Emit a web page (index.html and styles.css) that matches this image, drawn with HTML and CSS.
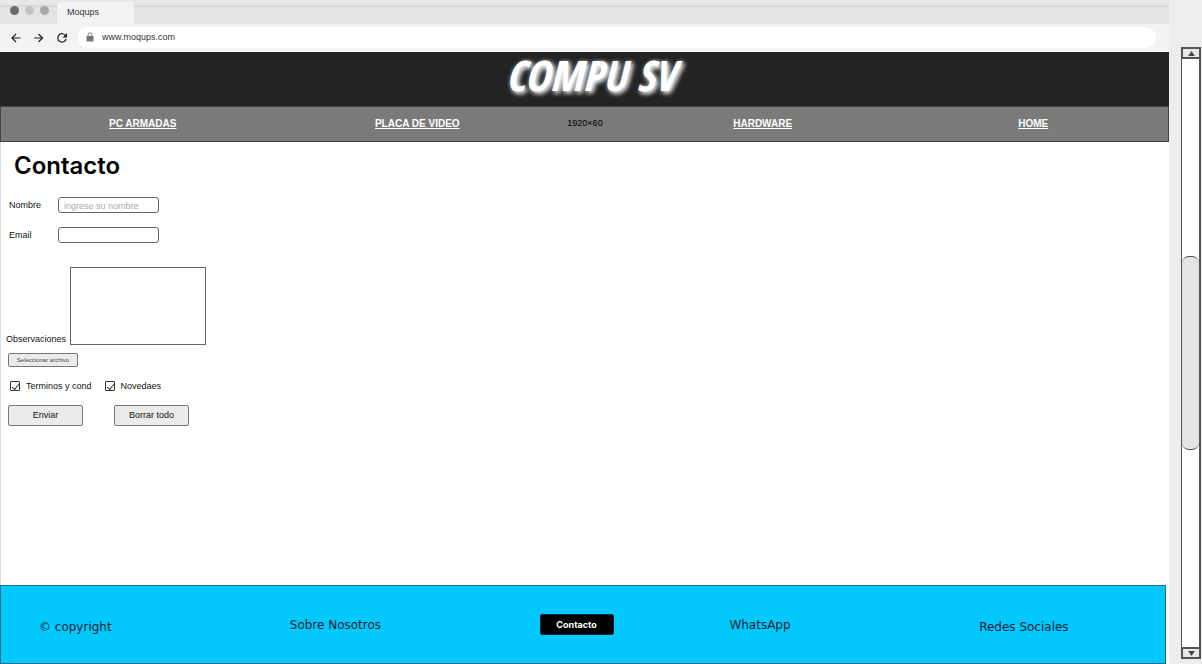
FILE: index.html
```html
<!DOCTYPE html>
<html lang="es">
<head>
<meta charset="utf-8">
<title>Compu SV - Contacto</title>
<link rel="stylesheet" href="styles.css">
</head>
<body>
<div class="browser">
  <div class="tabs">
    <span class="dot dot-dark"></span><span class="dot dot-light"></span><span class="dot"></span>
    <span class="tab">Moqups</span>
  </div>
  <div class="toolbar">
    <button class="tool" type="button" aria-label="Atrás"><svg viewBox="0 0 12 12"><path d="M10.5 6H2M6 2 2 6l4 4"/></svg></button>
    <button class="tool" type="button" aria-label="Adelante"><svg viewBox="0 0 12 12"><path d="M1 6h8.5M5.5 2l4 4-4 4"/></svg></button>
    <button class="tool" type="button" aria-label="Recargar"><svg viewBox="0 0 12 12"><path d="M9.6 3.7A4.2 4.2 0 1 0 10.1 7"/><path class="solid" d="M11 1v4.4H6.6z"/></svg></button>
    <div class="address">
      <svg class="lock" viewBox="0 0 8 10"><path class="solid" d="M.5 4h7v5.5h-7z"/><path d="M2.2 4V2.6a1.8 1.8 0 0 1 3.6 0V4"/></svg>
      <input class="url" type="text" value="www.moqups.com" aria-label="Dirección">
    </div>
  </div>
  <header class="banner">COMPU SV</header>
  <nav class="nav">
    <a href="#">PC ARMADAS</a>
    <a href="#">PLACA DE VIDEO</a>
    <span class="size">1920×60</span>
    <a href="#">HARDWARE</a>
    <a href="#">HOME</a>
  </nav>
  <main class="main">
    <h1 class="title">Contacto</h1>
    <form class="form">
      <div class="row">
        <label class="label" for="nombre">Nombre</label>
        <input class="field" id="nombre" type="text" placeholder="ingrese su nombre">
      </div>
      <div class="row">
        <label class="label" for="email">Email</label>
        <input class="field" id="email" type="email">
      </div>
      <div class="row notes">
        <label class="notes-label" for="obs">Observaciones</label>
        <textarea class="area" id="obs"></textarea>
      </div>
      <button class="button file" type="button">Seleccionar archivo</button>
      <div class="checks">
        <label class="check"><input type="checkbox" checked>Terminos y cond</label>
        <label class="check"><input type="checkbox" checked>Novedaes</label>
      </div>
      <div class="actions">
        <button class="button" type="submit">Enviar</button>
        <button class="button" type="reset">Borrar todo</button>
      </div>
    </form>
  </main>
  <footer class="footer">
    <span class="low">© copyright</span>
    <a href="#">Sobre Nosotros</a>
    <button class="contact" type="button">Contacto</button>
    <a href="#">WhatsApp</a>
    <a class="low" href="#">Redes Sociales</a>
  </footer>
</div>
<aside class="scrollbar">
  <button class="arrow" type="button" aria-label="Subir"><svg viewBox="0 0 8 6"><path d="M4 0l4 6H0z"/></svg></button>
  <div class="track"><div class="thumb"></div></div>
  <button class="arrow" type="button" aria-label="Bajar"><svg viewBox="0 0 8 6"><path d="M0 0h8L4 6z"/></svg></button>
</aside>
</body>
</html>
```
FILE: styles.css
```css
* { box-sizing: border-box; }
body {
  margin: 0;
  min-height: 100vh;
  display: flex;
  background: #ededed;
  color: #111;
  font: 9px/12px "Liberation Sans", Arial, sans-serif;
}
button, input, textarea { font: inherit; color: inherit; margin: 0; }
button { padding: 0; }
a { color: inherit; text-decoration: none; }
.browser {
  flex: 1;
  display: flex;
  flex-direction: column;
  background: #fff;
}
.tabs {
  display: flex;
  gap: 6px;
  height: 24px;
  padding-left: 10px;
  background: linear-gradient(#e8e8e8 5px, #d8d8d8 5px, #d8d8d8 7px, #e4e4e4 7px);
}
.dot { width: 9px; height: 9px; margin-top: 6px; border-radius: 50%; background: #a9a9a9; }
.dot-dark { background: #6b6b6b; }
.dot-light { background: #c4c4c4; }
.tab {
  width: 77px;
  margin: 2px 0 0 2px;
  padding: 4px 10px;
  border-radius: 4px 4px 0 0;
  background: #f3f3f3;
  color: #333;
}
.toolbar {
  display: flex;
  align-items: center;
  gap: 11px;
  height: 28px;
  padding: 0 13px 0 10px;
  background: #f3f3f3;
  border-bottom: 1px solid #fff;
}
.tool { width: 12px; height: 12px; border: 0; background: none; }
.tool svg { display: block; width: 12px; height: 12px; fill: none; stroke: #222; stroke-width: 1.2; }
.tool .solid { fill: #222; stroke: none; }
.address {
  flex: 1;
  display: flex;
  align-items: center;
  gap: 8px;
  height: 21px;
  padding: 0 8px 2px;
  margin-left: -1px;
  border-radius: 11px;
  background: #fff;
}
.lock { width: 8px; height: 10px; fill: none; stroke: #777; }
.lock .solid { fill: #777; stroke: none; }
.url { flex: 1; padding: 0; border: 0; background: none; color: #333; outline: 0; }
.banner {
  height: 54px;
  background: #232323;
  color: #fff;
  text-align: center;
  font: italic bold 42px/46px "Open Sans Condensed", "Liberation Sans Narrow", Lato, sans-serif;
  text-shadow: 2px 2px 5px #fff, 1px 1px 5px #999;
  padding-left: 12px;
}
.nav {
  display: grid;
  grid-template-columns: 284fr 266fr 70fr 286fr 256fr 7fr;
  align-items: center;
  justify-items: center;
  height: 36px;
  border: 1px solid #444;
  background: #7a7a7a;
}
.nav a { color: #fff; font-weight: bold; font-size: 10px; text-decoration: underline; }
.size { color: #000; padding-bottom: 2px; }
.main { flex: 1; padding: 10px 6px; border-left: 1px solid #ddd; }
.title { margin: 0 0 17px 7px; font: 600 24px/28px Inter, sans-serif; color: #000; }
.form { display: flex; flex-direction: column; align-items: flex-start; }
.row { display: flex; align-items: center; margin-bottom: 14px; }
.label { width: 51px; padding-left: 2px; }
.field {
  width: 101px;
  height: 16px;
  padding: 1px 5px 0;
  border: 1px solid #666;
  border-radius: 3px;
  background: #fff;
}
.field::placeholder { color: #aaa; opacity: 1; }
.notes { align-items: flex-end; margin: 10px 0 8px -1px; }
.notes-label { width: 64px; }
.area { width: 136px; height: 78px; border: 1px solid #666; background: #fff; resize: none; }
.button {
  width: 75px;
  height: 21px;
  padding-bottom: 1px;
  border: 1px solid #777;
  border-radius: 2px;
  background: #ebebeb;
}
.file {
  width: 70px;
  height: 14px;
  margin-left: 1px;
  color: #444;
  font-size: 6px;
  line-height: 8px;
}
.checks { display: flex; gap: 13px; margin: 13px 0; padding-left: 3px; }
.check { display: flex; align-items: center; gap: 6px; }
.check input {
  appearance: none;
  width: 10px;
  height: 10px;
  border: 1px solid #333;
  border-radius: 1px;
  background: #fff;
}
.check input:checked::before {
  content: "";
  display: block;
  width: 6px;
  height: 3px;
  margin: 2px 0 0 1px;
  border: solid #333;
  border-width: 0 0 1px 1px;
  transform: rotate(-50deg);
}
.actions { display: flex; gap: 31px; margin-left: 1px; }
.footer {
  display: grid;
  grid-template-columns: 251fr 250fr 190fr 250fr 186fr;
  align-items: center;
  justify-items: start;
  height: 79px;
  margin-right: 3px;
  padding-left: 38px;
  border: 1px solid #1b6f8f;
  background: #02c8fc;
  color: #123;
  font: 12px/16px "DejaVu Sans", sans-serif;
}
.low { padding-top: 4px; }
.contact {
  width: 74px;
  height: 21px;
  border: 1px solid #123;
  border-radius: 2px;
  background: #000;
  color: #fff;
  font: bold 9px/12px Inter, sans-serif;
}
.scrollbar {
  display: flex;
  flex-direction: column;
  width: 20px;
  margin: 47px 1px 5px 12px;
}
.arrow {
  display: flex;
  align-items: center;
  justify-content: center;
  height: 12px;
  border: 2px solid #555;
  background: #e8e8e8;
}
.arrow svg { width: 7px; height: 5px; fill: #444; }
.track {
  flex: 1;
  display: flex;
  flex-direction: column;
  justify-content: center;
  border: solid #555;
  border-width: 0 2px 0 1px;
  background: #fff;
}
.thumb { height: 33%; border: 1px solid #555; border-width: 1px 0; border-radius: 7px; background: #e4e4e4; }
```
